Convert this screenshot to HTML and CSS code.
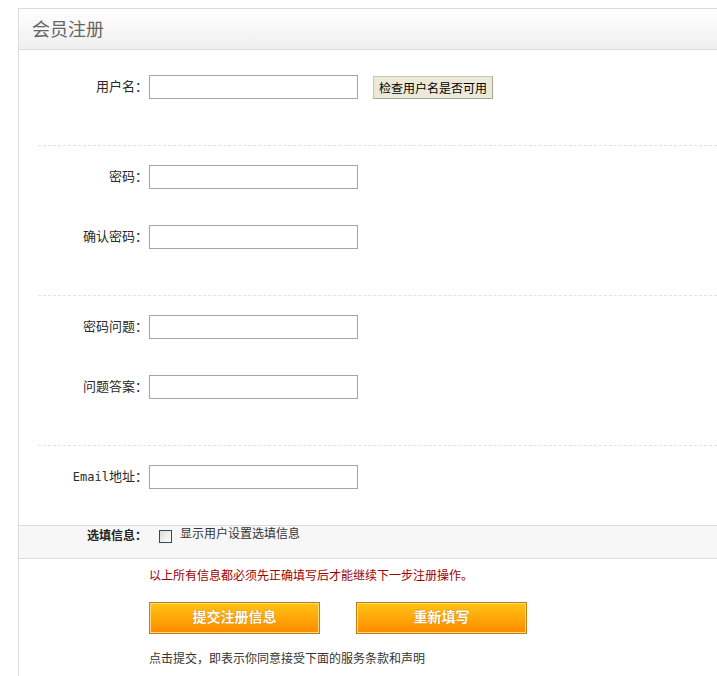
FILE: index.html
```html
<!DOCTYPE html>
<html lang="zh-CN">
<head>
    <meta charset="UTF-8">
    <title>会员注册</title>
    <link rel="stylesheet" href="styles.css">
</head>
<body>
    <div class="panel">
        <!-- header -->
        <div class="panel-head">会员注册</div>

        <form id="reg-form" method="post">
            <!-- username -->
            <div class="group first">
                <div class="row">
                    <label class="lbl" for="username">用户名：</label>
                    <input class="txt" type="text" id="username" name="username">
                    <button type="button" class="check">检查用户名是否可用</button>
                </div>
            </div>

            <!-- password -->
            <div class="group">
                <div class="row">
                    <label class="lbl" for="pwd">密码：</label>
                    <input class="txt" type="password" id="pwd" name="pwd">
                </div>
                <div class="row">
                    <label class="lbl" for="pwd2">确认密码：</label>
                    <input class="txt" type="password" id="pwd2" name="pwd2">
                </div>
            </div>

            <!-- question -->
            <div class="group">
                <div class="row">
                    <label class="lbl" for="question">密码问题：</label>
                    <input class="txt" type="text" id="question" name="question">
                </div>
                <div class="row">
                    <label class="lbl" for="answer">问题答案：</label>
                    <input class="txt" type="text" id="answer" name="answer">
                </div>
            </div>

            <!-- email -->
            <div class="group last">
                <div class="row">
                    <label class="lbl" for="email"><span class="latin">Email</span>地址：</label>
                    <input class="txt" type="text" id="email" name="email">
                </div>
            </div>

            <!-- optional info -->
            <div class="band">
                <span class="band-lbl">选填信息：</span>
                <input class="chk" type="checkbox" id="more">
                <label class="chk-txt" for="more">显示用户设置选填信息</label>
            </div>

            <div class="foot">
                <p class="warn">以上所有信息都必须先正确填写后才能继续下一步注册操作。</p>
                <div class="btns">
                    <button type="submit" class="big">提交注册信息</button>
                    <button type="reset" class="big second">重新填写</button>
                </div>
                <p class="note">点击提交，即表示你同意接受下面的服务条款和声明</p>
            </div>
        </form>
    </div>
</body>
</html>
```

FILE: styles.css
```css
* {
    margin: 0px;
    padding: 0px;
    box-sizing: border-box;
}

html, body {
    overflow: hidden;
}

body {
    margin: 8px 0 0 18px;
    font-family: "Noto Sans CJK SC", sans-serif;
    font-size: 12px;
    color: #333;
    background: #fff;
}

.panel {
    border: 1px solid #dcdcdc;
    border-right: none;
    border-bottom: none;
}

.panel-head {
    height: 41px;
    line-height: 39px;
    padding-left: 13px;
    font-size: 18px;
    color: #666;
    background: linear-gradient(#ffffff, #efefef);
    border-bottom: 1px solid #dcdcdc;
}

/* field groups */
.group {
    margin-left: 19px;
    padding-top: 19px;
    padding-bottom: 10px;
    border-bottom: 1px dashed #e2e2e2;
}

.group.first {
    padding-top: 25px;
}

.group.last {
    padding-bottom: 0px;
    border-bottom: none;
}

.row {
    display: flex;
    align-items: center;
    height: 24px;
    margin-bottom: 36px;
}

.lbl {
    width: 110px;
    text-align: right;
    margin-right: 1px;
    padding-bottom: 3px;
    font-size: 13px;
    color: #2a2a2a;
}

.latin {
    font-family: "DejaVu Sans Mono", monospace;
    font-size: 12px;
}

.txt {
    width: 209px;
    height: 24px;
    border: 1px solid #a5a5a5;
    padding-left: 4px;
    font-size: 12px;
}

.check {
    margin-left: 15px;
    width: 120px;
    height: 23px;
    font-family: "Noto Sans CJK SC", sans-serif;
    font-size: 12px;
    color: #000;
    background: #ece9d8;
    border: 1px solid #a7a493;
    border-top-color: #c9c6b6;
    border-left-color: #c9c6b6;
}

/* optional info band */
.band {
    display: flex;
    align-items: flex-start;
    height: 34px;
    background: #f7f7f7;
    border-top: 1px solid #dcdcdc;
    border-bottom: 1px solid #dcdcdc;
    line-height: 18px;
}

.band-lbl {
    width: 128px;
    text-align: right;
    font-weight: bold;
    color: #222;
}

.chk {
    appearance: none;
    width: 13px;
    height: 13px;
    margin: 4px 0 0 12px;
    border: 1px solid #2f4b5c;
    background: linear-gradient(135deg, #dcdcd5, #ffffff);
}

.chk:checked {
    background: #fff;
}

.chk-txt {
    margin-left: 8px;
    line-height: 14px;
    margin-top: 0px;
}

/* bottom */
.foot {
    padding: 7px 0 20px 130px;
}

.warn {
    line-height: 18px;
    color: #a00000;
}

.btns {
    display: flex;
    margin-top: 18px;
}

.big {
    width: 171px;
    height: 32px;
    padding-bottom: 4px;
    border: 1px solid #c17c1c;
    box-shadow: inset 0 0 0 1px #ffd87a;
    background: linear-gradient(#ffc413, #ff8a00);
    color: #fff;
    font-family: "Noto Sans CJK SC", sans-serif;
    font-size: 14px;
    font-weight: bold;
    text-shadow: 0 0 1px #b36200;
    cursor: pointer;
}

.big.second {
    margin-left: 36px;
}

.note {
    margin-top: 15px;
    line-height: 18px;
}
```
